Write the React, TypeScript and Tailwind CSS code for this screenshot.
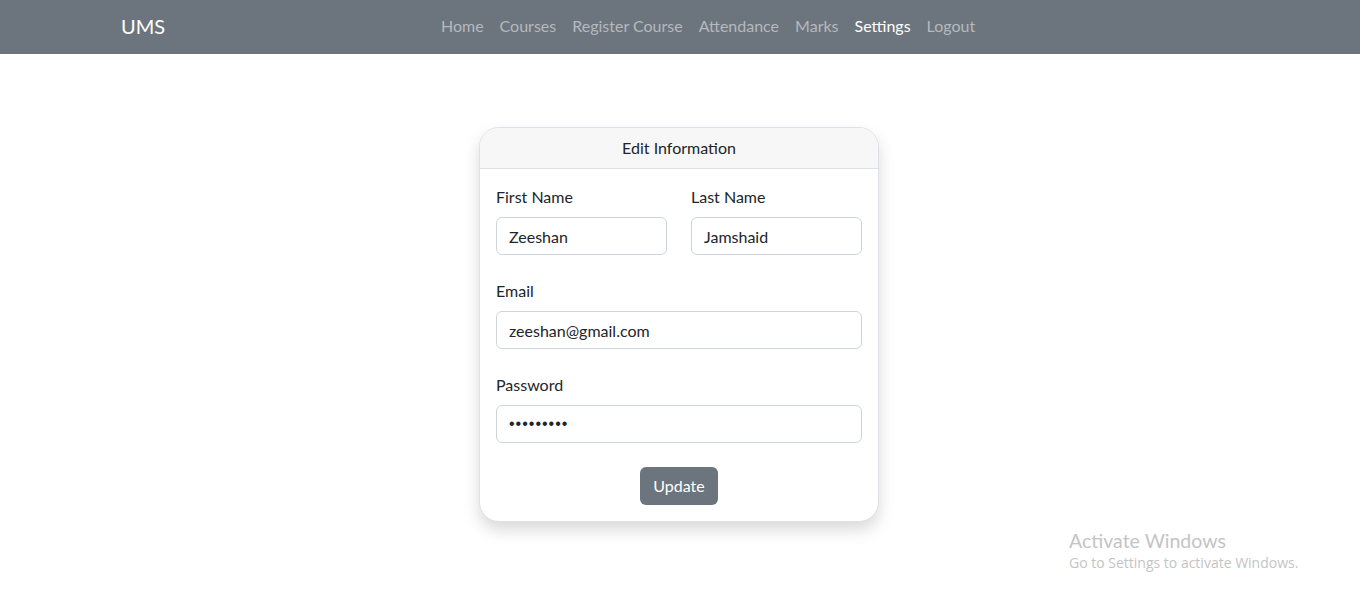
import { useState } from "react";

const links = ["Home", "Courses", "Register Course", "Attendance", "Marks", "Settings", "Logout"];

function Navbar({ active }: { active: string }) {
    return (
        <nav className="h-[54px] bg-[#6c757d]">
            <div className="mx-auto flex h-full w-[1140px] items-center px-[11px] pb-[2px]">
                <a className="mr-4 text-[20px] text-white">UMS</a>
                <ul className="mx-auto flex items-center pr-1">
                    {links.map((l) => (
                        <li key={l}>
                            <a
                                className={
                                    "px-2 py-2 text-[16px] " +
                                    (l === active ? "text-white" : "text-[#b5b9bd]")
                                }
                            >
                                {l}
                            </a>
                        </li>
                    ))}
                </ul>
            </div>
        </nav>
    );
}

function Field({
    label,
    value,
    type = "text",
}: {
    label: string;
    value: string;
    type?: string;
}) {
    const pwd = type === "password";
    return (
        <div className="flex flex-1 flex-col">
            <label className="mb-2 text-[16px] leading-6 text-[#212529]">{label}</label>
            <input
                type={type}
                defaultValue={value}
                readOnly
                className={
                    "h-[38px] w-full rounded-[6px] border border-[#ced4da] bg-white px-3 text-[16px] text-[#212529] outline-none " +
                    (pwd ? "font-['Liberation_Sans',sans-serif] tracking-[1px]" : "")
                }
            />
        </div>
    );
}

export default function App() {
    const [active] = useState("Settings");

    return (
        <div className="relative min-h-[605px] bg-white font-['Segoe_UI','Lato','Liberation_Sans',sans-serif]">
            <Navbar active={active} />

            <div className="flex justify-center pr-[2px] pt-[73px]">
                <div className="w-[400px] overflow-hidden rounded-[20px] border border-[#dee2e6] bg-white shadow-[0_8px_16px_rgba(0,0,0,0.15)]">
                    <div className="flex h-[41px] items-center justify-center border-b border-[#dee2e6] bg-[#f7f7f7] text-[16px] text-[#212529]">
                        Edit Information
                    </div>
                    <form className="flex flex-col gap-6 p-4">
                        <div className="flex gap-6">
                            <Field label="First Name" value="Zeeshan" />
                            <Field label="Last Name" value="Jamshaid" />
                        </div>
                        <Field label="Email" value="zeeshan@gmail.com" type="email" />
                        <Field label="Password" value="123456789" type="password" />
                        <div className="flex justify-center">
                            <button
                                type="button"
                                className="h-[38px] rounded-[6px] bg-[#6c757d] px-[13px] text-[16px] text-white"
                            >
                                Update
                            </button>
                        </div>
                    </form>
                </div>
            </div>

            <div className="pointer-events-none absolute left-[1069px] top-[528px] text-[#c4c4c4]">
                <p className="text-[19.5px] leading-[26px]">Activate Windows</p>
                <p className="font-['Open_Sans',sans-serif] text-[14px] leading-[18px]">
                    Go to Settings to activate Windows.
                </p>
            </div>
        </div>
    );
}
